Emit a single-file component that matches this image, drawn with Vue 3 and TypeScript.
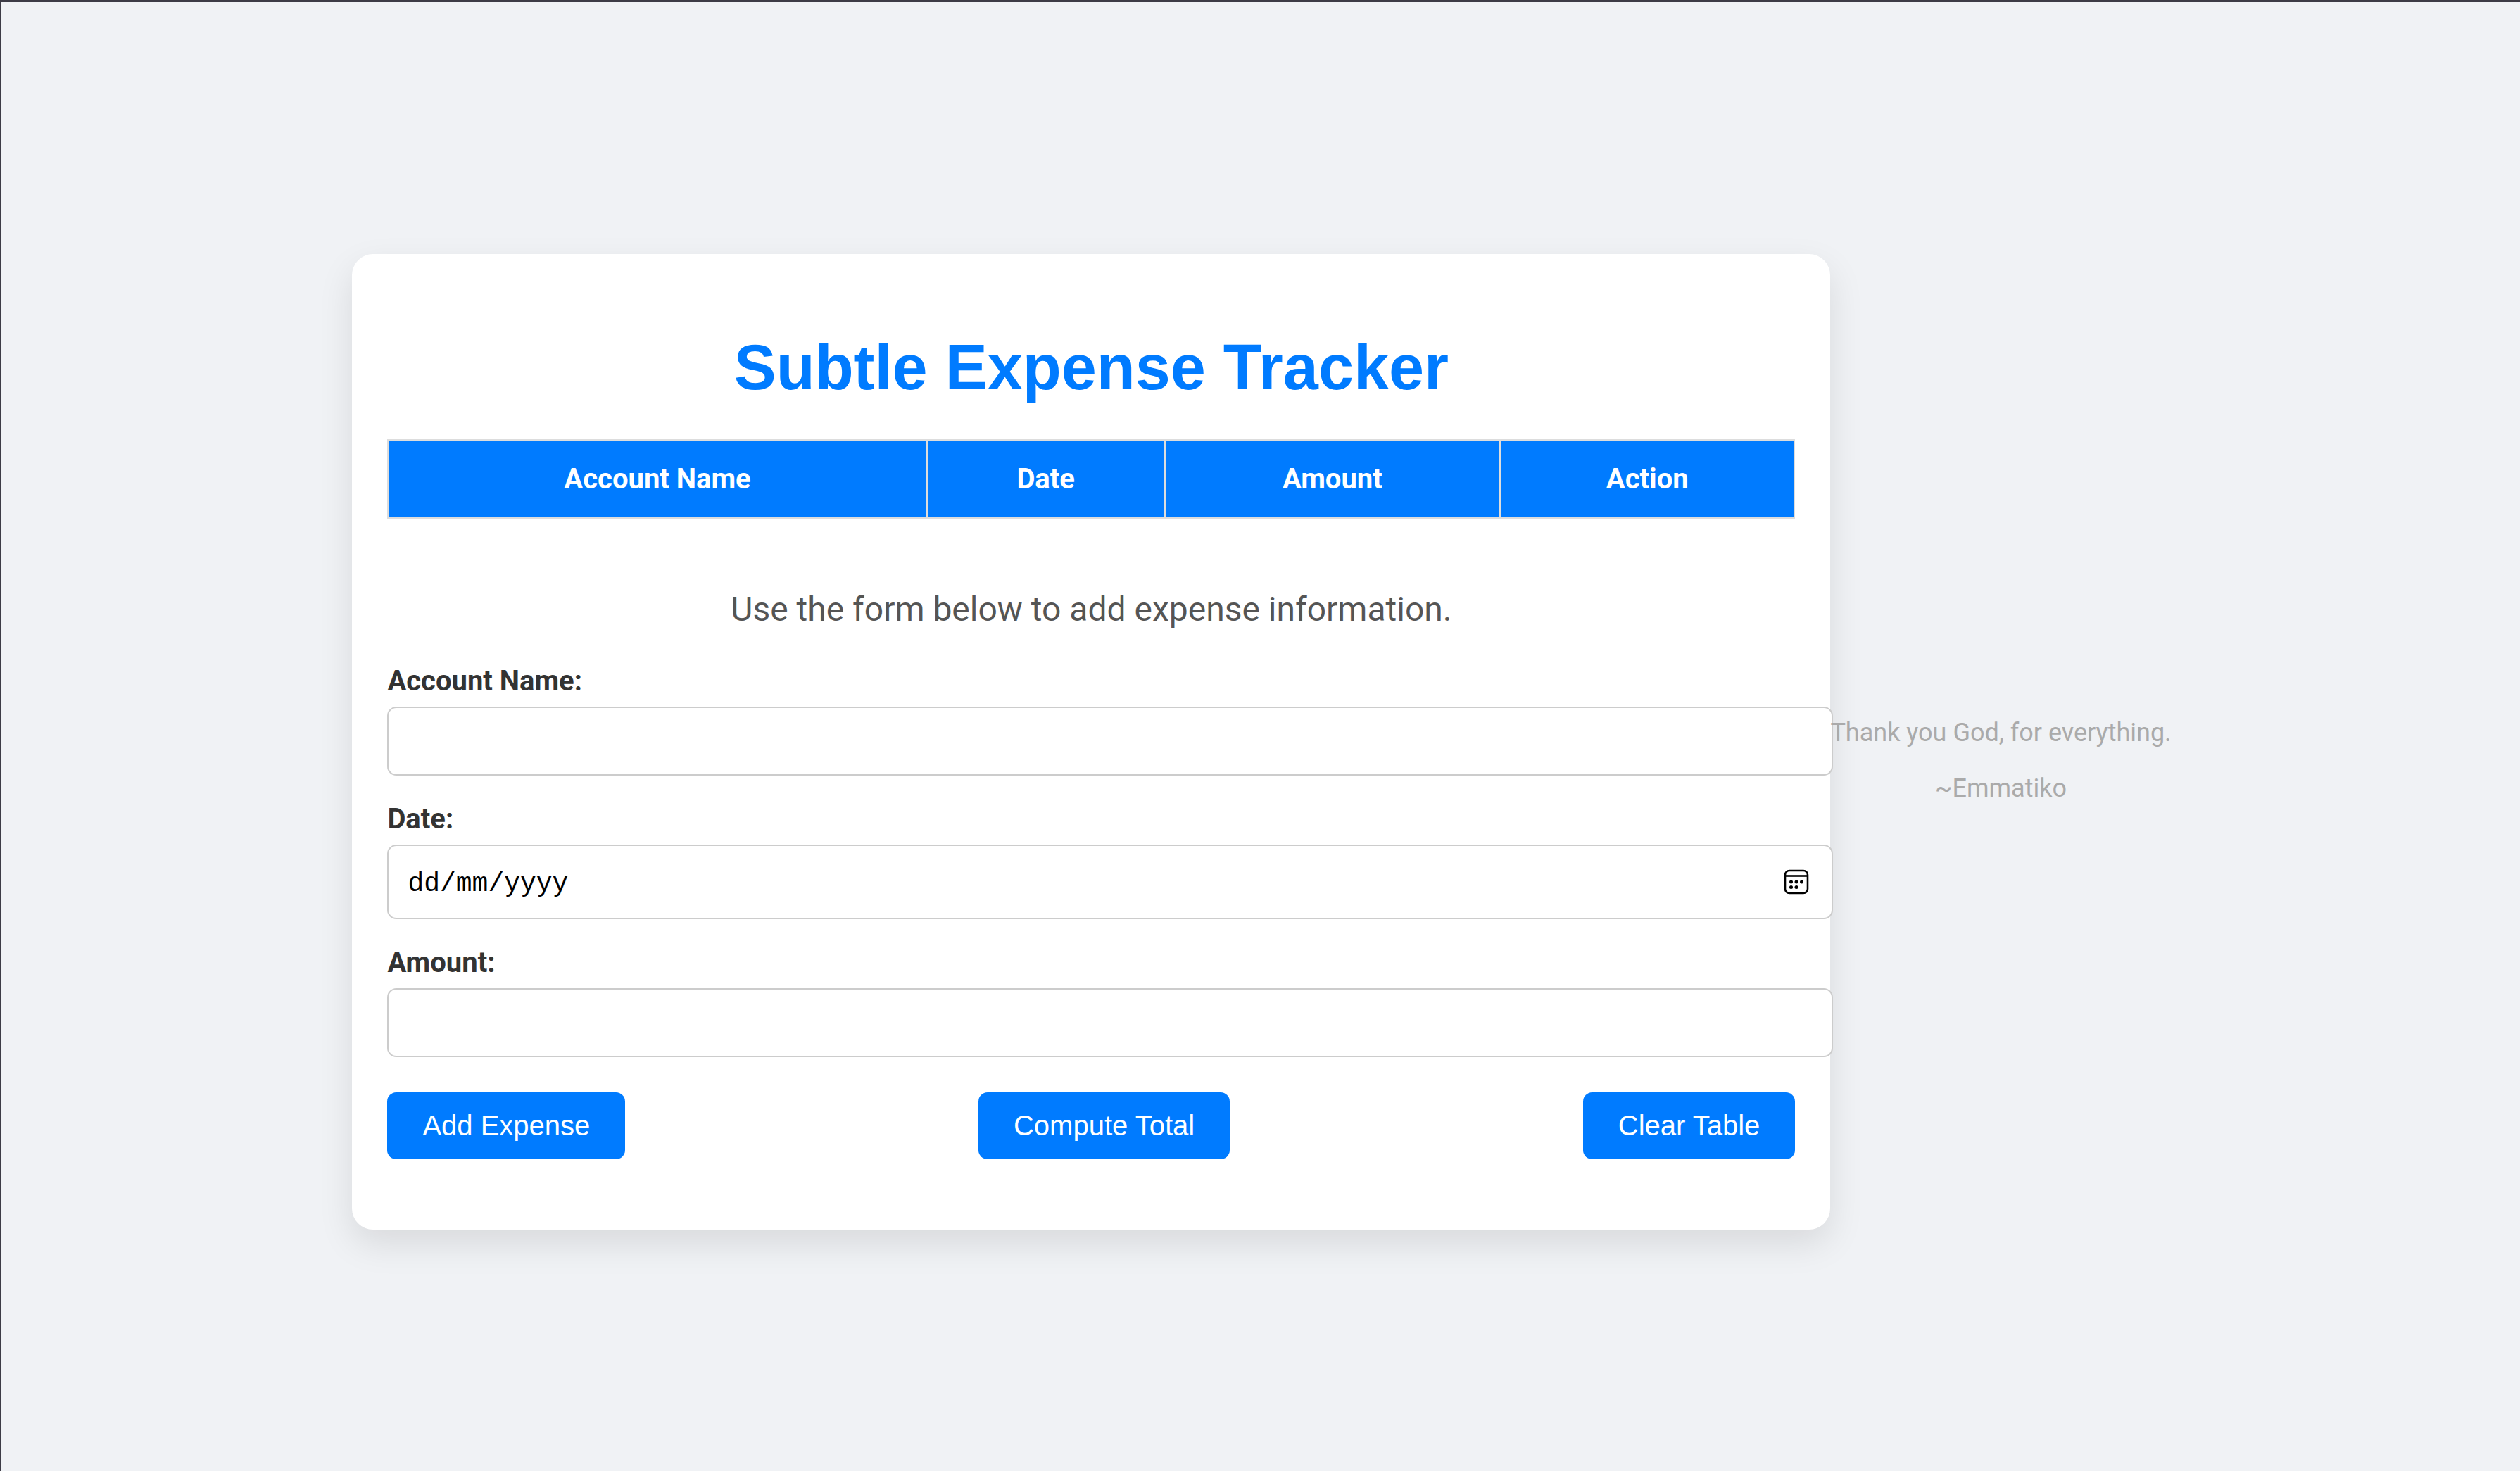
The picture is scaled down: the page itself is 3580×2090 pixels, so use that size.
<script setup lang="ts">
import { ref } from 'vue'

interface Expense {
  account: string
  date: string
  amount: string
}

const columns: string[] = ['Account Name', 'Date', 'Amount', 'Action']
const expenses = ref<Expense[]>([])
const account = ref('')
const date = ref('')
const amount = ref('')
const total = ref<number | null>(null)

function addExpense(): void {
  if (!account.value || !date.value || !amount.value) return
  expenses.value.push({ account: account.value, date: date.value, amount: amount.value })
  account.value = ''
  date.value = ''
  amount.value = ''
}

function removeExpense(index: number): void {
  expenses.value.splice(index, 1)
}

function computeTotal(): void {
  if (!expenses.value.length) return
  total.value = expenses.value.reduce((sum, item) => sum + Number(item.amount), 0)
}

function clearTable(): void {
  expenses.value = []
  total.value = null
}
</script>

<template>
  <div class="page">
    <main class="card">
      <h1>Subtle Expense Tracker</h1>
      <table>
        <thead>
          <tr>
            <th v-for="column in columns" :key="column" scope="col">{{ column }}</th>
          </tr>
        </thead>
        <tbody>
          <tr v-for="(item, index) in expenses" :key="index">
            <td>{{ item.account }}</td>
            <td>{{ item.date }}</td>
            <td>{{ item.amount }}</td>
            <td><button type="button" @click="removeExpense(index)">Delete</button></td>
          </tr>
        </tbody>
      </table>
      <p v-if="total !== null" class="hint">Total: {{ total }}</p>
      <form @submit.prevent="addExpense">
        <p class="hint">Use the form below to add expense information.</p>
        <div class="field">
          <label for="account">Account Name:</label>
          <input id="account" v-model="account" type="text" />
        </div>
        <div class="field">
          <label for="date">Date:</label>
          <div class="date-box">
            <input id="date" v-model="date" class="date" type="text" placeholder="dd/mm/yyyy" />
            <button class="picker" type="button" aria-label="Show date picker">
              <svg viewBox="0 0 36 36" width="36" height="36" aria-hidden="true">
                <rect x="2" y="2" width="32" height="32" rx="6" fill="none" stroke="#000" stroke-width="2.6" />
                <path d="M2 9.5H34" stroke="#000" stroke-width="2.6" />
                <circle cx="10.5" cy="18" r="2.5" />
                <circle cx="18" cy="18" r="2.5" />
                <circle cx="25.5" cy="18" r="2.5" />
                <circle cx="10.5" cy="25.5" r="2.5" />
                <circle cx="18" cy="25.5" r="2.5" />
              </svg>
            </button>
          </div>
        </div>
        <div class="field">
          <label for="amount">Amount:</label>
          <input id="amount" v-model="amount" type="text" inputmode="decimal" />
        </div>
        <div class="actions">
          <button type="submit">Add Expense</button>
          <button type="button" @click="computeTotal">Compute Total</button>
          <button type="button" @click="clearTable">Clear Table</button>
        </div>
      </form>
    </main>
    <footer>
      <p>Thank you God, for everything.</p>
      <p>~Emmatiko</p>
    </footer>
  </div>
</template>

<style>
body {
  margin: 0;
  background: #f0f2f5;
}
</style>

<style scoped>
.page {
  box-sizing: border-box;
  min-height: 100vh;
  padding-top: 15px;
  padding-left: 4px;
  border-top: 3px solid #3d3c46;
  border-left: 1px solid #3d3c46;
  display: flex;
  justify-content: center;
  align-items: center;
  background: #f0f2f5;
  color: #333;
  font-family: Roboto, sans-serif;
  font-size: 40px;
  line-height: 47px;
}

.card {
  box-sizing: border-box;
  flex: 0 1 2100px;
  padding: 50px;
  border-radius: 30px;
  background: #fff;
  box-shadow: 0 20px 50px rgba(0, 0, 0, 0.1);
}

h1 {
  margin: 60px 0 50px;
  color: #007bff;
  font-family: "Liberation Sans", Arial, sans-serif;
  font-size: 90px;
  line-height: 103px;
  text-align: center;
}

table {
  width: 100%;
  margin-bottom: 50px;
  border-collapse: collapse;
}

th,
td {
  padding: 30px;
  border: 2px solid #ddd;
  line-height: 49px;
  text-align: center;
}

th {
  background: #007bff;
  color: #fff;
}

.hint {
  margin: 50px 0;
  color: #555;
  font-size: 48px;
  line-height: 57px;
  text-align: center;
}

form {
  padding-top: 50px;
  margin-bottom: 50px;
}

form > .hint {
  margin-top: 0;
}

.field {
  margin-bottom: 38px;
}

label {
  display: block;
  margin-bottom: 13px;
  font-weight: 700;
}

input {
  display: block;
  box-sizing: content-box;
  width: 100%;
  height: 46px;
  padding: 24px 25px;
  border: 2px solid #ccc;
  border-radius: 13px;
  outline: none;
  background: #fff;
  color: #000;
  font-family: Roboto, sans-serif;
  font-size: 40px;
}

.date-box {
  position: relative;
}

.date {
  height: 54px;
  padding: 26px 25px 22px;
  text-indent: 2px;
  font-family: "Liberation Mono", monospace;
  font-size: 38px;
}

.date::placeholder {
  color: #000;
  opacity: 1;
}

button {
  padding: 25px 50px;
  border: 0;
  border-radius: 13px;
  background: #007bff;
  color: #fff;
  font-family: "Liberation Sans", Arial, sans-serif;
  font-size: 40px;
  line-height: 45px;
  cursor: pointer;
}

.picker {
  position: absolute;
  top: 35px;
  right: -20px;
  padding: 0;
  background: none;
  line-height: 0;
}

.actions {
  display: flex;
  justify-content: space-between;
  margin-top: 50px;
}

footer {
  position: relative;
  margin-top: 52px;
  color: #aaa;
  font-size: 36px;
  line-height: 42px;
  text-align: center;
  white-space: nowrap;
}

footer p {
  margin: 0;
}

footer p + p {
  margin-top: 37px;
}
</style>
